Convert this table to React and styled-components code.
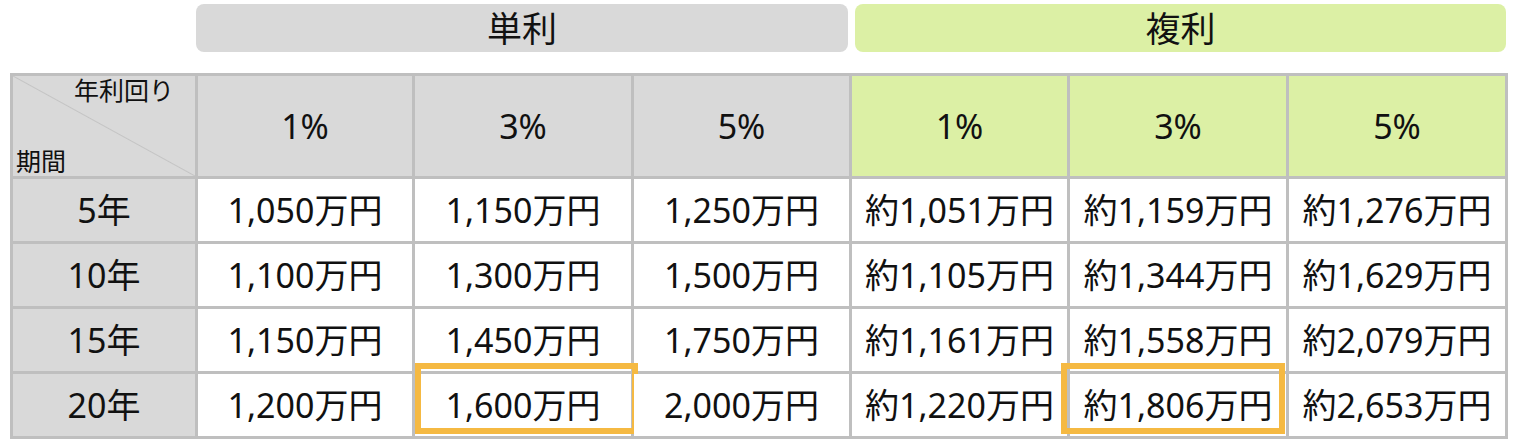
import React from 'react';
import styled, { createGlobalStyle } from 'styled-components';

const GlobalStyle = createGlobalStyle`
  body {
    margin: 0;
    background: #ffffff;
    font-family: 'Noto Sans', 'Noto Sans CJK JP', sans-serif;
    color: #111111;
  }
`;

const COLS = '182px 214px 216px 215px 215px 216px 216px';

const Page = styled.div`
  padding: 4px 0 0 10px;
`;

const TitleRow = styled.div`
  display: flex;
  gap: 7px;
  margin-left: 186px;
  margin-bottom: 21px;
`;

const TitleBar = styled.div`
  width: ${(p) => p.$width}px;
  height: 48px;
  border-radius: 8px;
  background-color: ${(p) => (p.$green ? '#dcf0a5' : '#d9d9d9')};
  display: flex;
  align-items: center;
  justify-content: center;
  font-size: 35px;
  line-height: 1;
`;

const Table = styled.div`
  display: grid;
  grid-template-columns: ${COLS};
  grid-template-rows: 100px repeat(4, 62px);
  gap: 3px;
  padding: 3px;
  background-color: #bfbfbf;
  width: max-content;
`;

const Cell = styled.div`
  position: relative;
  display: flex;
  align-items: center;
  justify-content: center;
  font-size: 34px;
  line-height: 1;
  white-space: nowrap;
  background-color: ${(p) =>
    p.$tone === 'gray' ? '#d9d9d9' : p.$tone === 'green' ? '#dcf0a5' : '#ffffff'};
`;

const Corner = styled.div`
  position: relative;
  background-color: #d9d9d9;
  background-image: linear-gradient(
    to top right,
    transparent calc(50% - 1px),
    #c4c4c4 50%,
    transparent calc(50% + 1px)
  );
  display: flex;
  flex-direction: column;
  justify-content: space-between;
  padding: 1px 0 0 3px;
  font-size: 25px;
  line-height: 1.1;
`;

const CornerTop = styled.span`
  align-self: flex-end;
  margin-right: 21px;
`;

const CornerBottom = styled.span`
  align-self: flex-start;
  margin-bottom: 1px;
`;

const Highlight = styled.div`
  position: absolute;
  top: ${(p) => p.$top}px;
  bottom: ${(p) => p.$bottom}px;
  left: ${(p) => p.$left}px;
  right: ${(p) => p.$right}px;
  border: 6px solid #f5b942;
  pointer-events: none;
`;

const rates = ['1%', '3%', '5%'];

const rows = [
  {
    label: '5年',
    simple: ['1,050万円', '1,150万円', '1,250万円'],
    compound: ['約1,051万円', '約1,159万円', '約1,276万円'],
  },
  {
    label: '10年',
    simple: ['1,100万円', '1,300万円', '1,500万円'],
    compound: ['約1,105万円', '約1,344万円', '約1,629万円'],
  },
  {
    label: '15年',
    simple: ['1,150万円', '1,450万円', '1,750万円'],
    compound: ['約1,161万円', '約1,558万円', '約2,079万円'],
  },
  {
    label: '20年',
    simple: ['1,200万円', '1,600万円', '2,000万円'],
    compound: ['約1,220万円', '約1,806万円', '約2,653万円'],
    marks: { simple: 1, compound: 1 },
  },
];

const App = () => {
  return (
    <Page>
      <GlobalStyle />
      <TitleRow>
        <TitleBar $width={652}>単利</TitleBar>
        <TitleBar $width={651} $green>
          複利
        </TitleBar>
      </TitleRow>
      <Table>
        <Corner>
          <CornerTop>年利回り</CornerTop>
          <CornerBottom>期間</CornerBottom>
        </Corner>
        {rates.map((r) => (
          <Cell key={'s' + r} $tone='gray'>
            {r}
          </Cell>
        ))}
        {rates.map((r) => (
          <Cell key={'c' + r} $tone='green'>
            {r}
          </Cell>
        ))}
        {rows.map((row) => (
          <React.Fragment key={row.label}>
            <Cell $tone='gray'>{row.label}</Cell>
            {row.simple.map((v, i) => (
              <Cell key={'s' + i}>
                {v}
                {row.marks && row.marks.simple === i && (
                  <Highlight $top={-11} $bottom={2} $left={0} $right={-7} />
                )}
              </Cell>
            ))}
            {row.compound.map((v, i) => (
              <Cell key={'c' + i}>
                {v}
                {row.marks && row.marks.compound === i && (
                  <Highlight $top={-11} $bottom={2} $left={-9} $right={1} />
                )}
              </Cell>
            ))}
          </React.Fragment>
        ))}
      </Table>
    </Page>
  );
};

export default App;
